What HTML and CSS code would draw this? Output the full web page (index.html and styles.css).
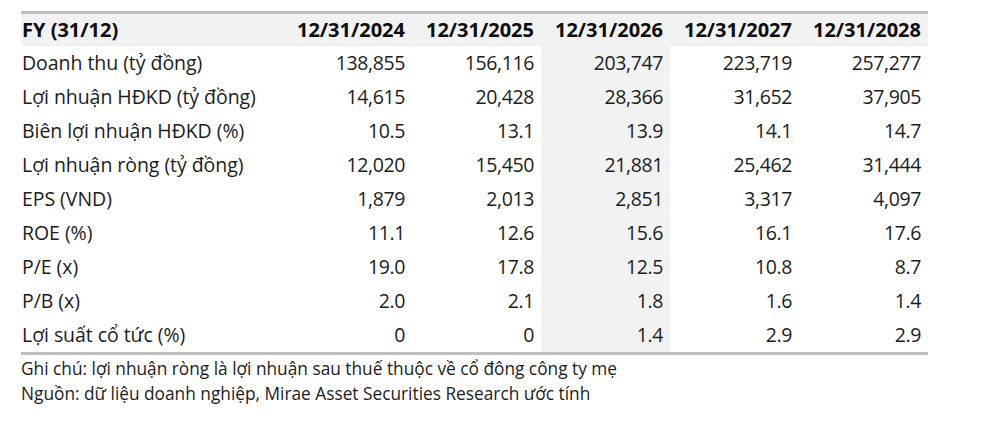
FILE: index.html
```html
<!DOCTYPE html>
<html lang="vi">
<head>
<meta charset="utf-8">
<link rel="stylesheet" href="styles.css">
</head>
<body>
<div class="wrap">
  <table class="fin">
    <colgroup>
      <col class="c-label"><col class="c-num"><col class="c-num"><col class="c-num c-hl"><col class="c-num"><col class="c-last">
    </colgroup>
    <thead>
      <tr><th class="lbl">FY (31/12)</th><th>12/31/2024</th><th>12/31/2025</th><th>12/31/2026</th><th>12/31/2027</th><th>12/31/2028</th></tr>
    </thead>
    <tbody>
      <tr><td class="lbl">Doanh thu (tỷ đồng)</td><td>138,855</td><td>156,116</td><td class="hl">203,747</td><td>223,719</td><td>257,277</td></tr>
      <tr><td class="lbl">Lợi nhuận HĐKD (tỷ đồng)</td><td>14,615</td><td>20,428</td><td class="hl">28,366</td><td>31,652</td><td>37,905</td></tr>
      <tr><td class="lbl">Biên lợi nhuận HĐKD (%)</td><td>10.5</td><td>13.1</td><td class="hl">13.9</td><td>14.1</td><td>14.7</td></tr>
      <tr><td class="lbl">Lợi nhuận ròng (tỷ đồng)</td><td>12,020</td><td>15,450</td><td class="hl">21,881</td><td>25,462</td><td>31,444</td></tr>
      <tr><td class="lbl">EPS (VND)</td><td>1,879</td><td>2,013</td><td class="hl">2,851</td><td>3,317</td><td>4,097</td></tr>
      <tr><td class="lbl">ROE (%)</td><td>11.1</td><td>12.6</td><td class="hl">15.6</td><td>16.1</td><td>17.6</td></tr>
      <tr><td class="lbl">P/E (x)</td><td>19.0</td><td>17.8</td><td class="hl">12.5</td><td>10.8</td><td>8.7</td></tr>
      <tr><td class="lbl">P/B (x)</td><td>2.0</td><td>2.1</td><td class="hl">1.8</td><td>1.6</td><td>1.4</td></tr>
      <tr><td class="lbl">Lợi suất cổ tức (%)</td><td>0</td><td>0</td><td class="hl">1.4</td><td>2.9</td><td>2.9</td></tr>
    </tbody>
  </table>
  <div class="notes">
    <p>Ghi chú: lợi nhuận ròng là lợi nhuận sau thuế thuộc về cổ đông công ty mẹ</p>
    <p>Nguồn: dữ liệu doanh nghiệp, Mirae Asset Securities Research ước tính</p>
  </div>
</div>
</body>
</html>
```
FILE: styles.css
```css
html, body {
  margin: 0;
  padding: 0;
  background: #ffffff;
}
body {
  font-family: "Open Sans", "Noto Sans", sans-serif;
  color: #1c1c1c;
}
.wrap {
  padding: 11px 0 0 21px;
}
.fin {
  border-collapse: collapse;
  table-layout: fixed;
  width: 907px;
  border-top: 3px solid #bfbfbf;
  border-bottom: 3px solid #bfbfbf;
}
.c-label { width: 262px; }
.c-num { width: 129px; }
.c-last { width: 129px; }
.fin th, .fin td {
  padding: 0 7px 0 0;
  text-align: right;
  white-space: nowrap;
}
.fin th {
  height: 32px;
  background: #f2f2f2;
  font-weight: 700;
  font-size: 20px;
  color: #0d0d0d;
  line-height: 32px;
}
.fin td {
  height: 34px;
  font-size: 19.5px;
  letter-spacing: -0.4px;
  line-height: 34px;
}
.fin .lbl {
  text-align: left;
  padding: 0 0 0 1px;
}
.fin td.lbl {
  letter-spacing: -0.05px;
}
.fin td.hl {
  background: #f2f2f2;
}
.notes {
  padding-top: 1px;
}
.notes p {
  margin: 0;
  font-size: 17.3px;
  line-height: 25px;
  color: #1c1c1c;
}
```
